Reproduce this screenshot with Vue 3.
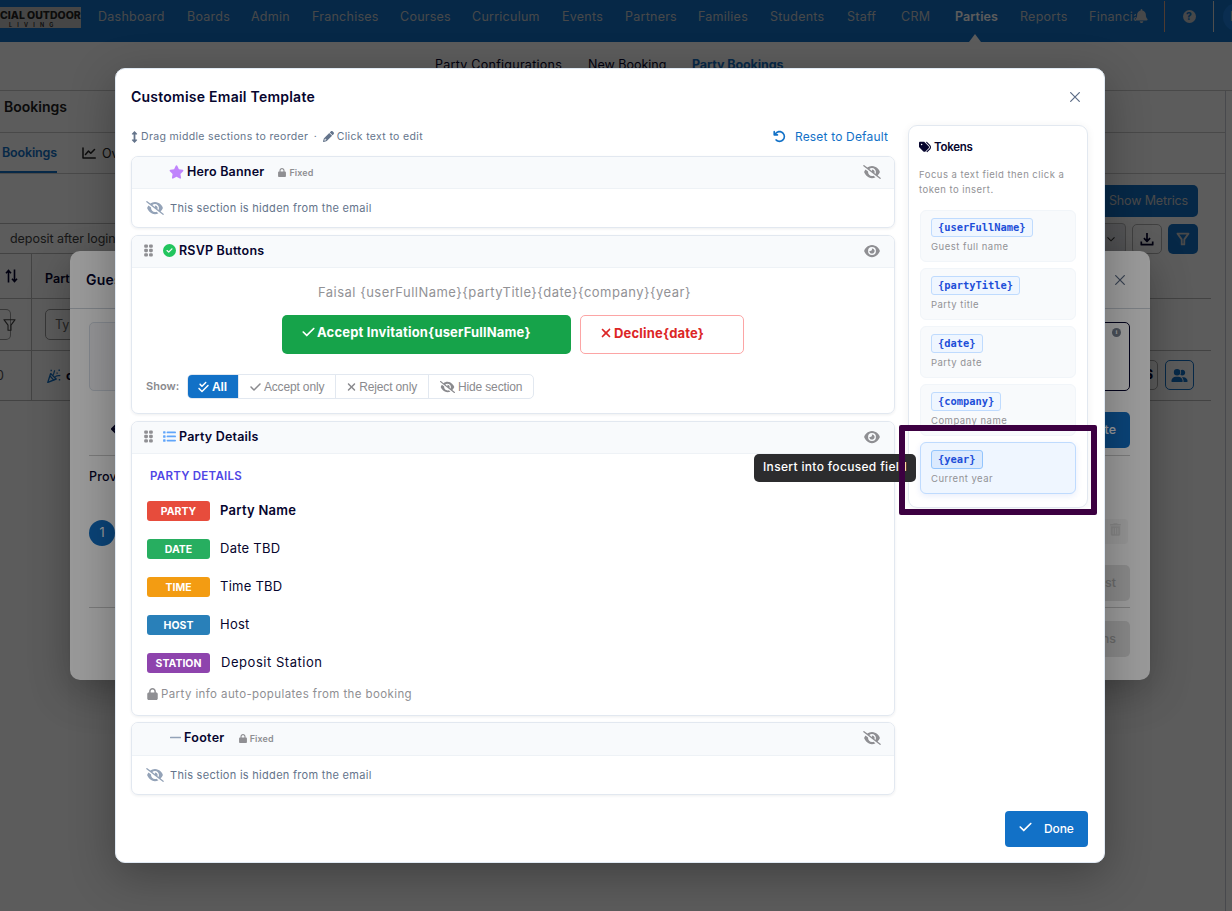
<script setup>
import { h } from 'vue'

const glyphs = {
  star: [576, 'M316.9 18C311.6 7 300.4 0 288.1 0s-23.4 7-28.8 18L195 150.3 51.4 171.5c-12 1.8-22 10.2-25.7 21.7s-.7 24.2 7.9 32.7L137.8 329 113.2 474.7c-2 12 3 24.2 12.9 31.3s23 8 33.8 2.3l128.3-68.5 128.3 68.5c10.8 5.7 23.9 4.9 33.8-2.3s14.9-19.3 12.9-31.3L438.5 329 542.7 225.9c8.6-8.5 11.7-21.2 7.9-32.7s-13.7-19.9-25.7-21.7L381.2 150.3 316.9 18z'],
  lock: [448, 'M144 144v48H304V144c0-44.2-35.8-80-80-80s-80 35.8-80 80zM80 192V144C80 64.5 144.5 0 224 0s144 64.5 144 144v48h16c35.3 0 64 28.7 64 64V448c0 35.3-28.7 64-64 64H64c-35.3 0-64-28.7-64-64V256c0-35.3 28.7-64 64-64H80z'],
  eye: [576, 'M288 32c-80.8 0-145.5 36.8-192.6 80.6C48.6 156 17.3 208 2.5 243.7c-3.3 7.9-3.3 16.7 0 24.6C17.3 304 48.6 356 95.4 399.4C142.5 443.2 207.2 480 288 480s145.5-36.8 192.6-80.6c46.8-43.5 78.1-95.4 93-131.1c3.3-7.9 3.3-16.7 0-24.6c-14.9-35.7-46.2-87.7-93-131.1C433.5 68.8 368.8 32 288 32zM144 256a144 144 0 1 1 288 0 144 144 0 1 1 -288 0zm144-64c0 35.3-28.7 64-64 64c-7.1 0-13.9-1.2-20.3-3.3c-5.5-1.8-11.9 1.6-11.7 7.4c.3 6.9 1.3 13.8 3.2 20.7c13.7 51.2 66.4 81.6 117.6 67.9s81.6-66.4 67.9-117.6c-11.1-41.5-47.8-69.4-88.6-71.1c-5.8-.2-9.2 6.1-7.4 11.7c2.1 6.4 3.3 13.2 3.3 20.3z'],
  eyeSlash: [640, 'M38.8 5.1C28.4-3.1 13.3-1.2 5.1 9.2S-1.2 34.7 9.2 42.9l592 464c10.4 8.2 25.5 6.3 33.7-4.1s6.3-25.5-4.1-33.7L525.6 386.7c39.6-40.6 66.4-86.1 79.9-118.4c3.3-7.9 3.3-16.7 0-24.6c-14.9-35.7-46.2-87.7-93-131.1C465.5 68.8 400.8 32 320 32c-68.2 0-125 26.3-169.3 60.8L38.8 5.1zM223.1 149.5C248.6 126.2 282.7 112 320 112c79.5 0 144 64.5 144 144c0 24.9-6.3 48.3-17.4 68.7L408 294.5c8.4-19.3 10.6-41.4 4.8-63.3c-11.1-41.5-47.8-69.4-88.6-71.1c-5.8-.2-9.2 6.1-7.4 11.7c2.1 6.4 3.3 13.2 3.3 20.3c0 10.2-2.4 19.8-6.6 28.3l-90.3-70.8zM373 389.9c-16.4 6.5-34.3 10.1-53 10.1c-79.5 0-144-64.5-144-144c0-6.9 .5-13.6 1.4-20.2L83.1 161.5C60.3 191.2 44 220.8 34.5 243.7c-3.3 7.9-3.3 16.7 0 24.6c14.9 35.7 46.2 87.7 93 131.1C174.5 443.2 239.2 480 320 480c47.8 0 89.9-12.9 126.2-32.5L373 389.9z'],
  check: [448, 'M438.6 105.4c12.5 12.5 12.5 32.8 0 45.3l-256 256c-12.5 12.5-32.8 12.5-45.3 0l-128-128c-12.5-12.5-12.5-32.8 0-45.3s32.8-12.5 45.3 0L160 338.7 393.4 105.4c12.5-12.5 32.8-12.5 45.3 0z'],
  cross: [384, 'M342.6 150.6c12.5-12.5 12.5-32.8 0-45.3s-32.8-12.5-45.3 0L192 210.7 86.6 105.4c-12.5-12.5-32.8-12.5-45.3 0s-12.5 32.8 0 45.3L146.7 256 41.4 361.4c-12.5 12.5-12.5 32.8 0 45.3s32.8 12.5 45.3 0L192 301.3 297.4 406.6c12.5 12.5 32.8 12.5 45.3 0s12.5-32.8 0-45.3L237.3 256 342.6 150.6z'],
  checkDouble: [448, 'M342.6 86.6c12.5-12.5 12.5-32.8 0-45.3s-32.8-12.5-45.3 0L160 178.7l-57.4-57.4c-12.5-12.5-32.8-12.5-45.3 0s-12.5 32.8 0 45.3l80 80c12.5 12.5 32.8 12.5 45.3 0l160-160zm96 128c12.5-12.5 12.5-32.8 0-45.3s-32.8-12.5-45.3 0L160 402.7 54.6 297.4c-12.5-12.5-32.8-12.5-45.3 0s-12.5 32.8 0 45.3l128 128c12.5 12.5 32.8 12.5 45.3 0l256-256z'],
  circleCheck: [512, 'M256 512A256 256 0 1 0 256 0a256 256 0 1 0 0 512zM369 209L241 337c-9.4 9.4-24.6 9.4-33.9 0l-64-64c-9.4-9.4-9.4-24.6 0-33.9s24.6-9.4 33.9 0l47 47L335 175c9.4-9.4 24.6-9.4 33.9 0s9.4 24.6 0 33.9z'],
  tags: [512, 'M345 39.1L472.8 168.4c52.4 53 52.4 138.2 0 191.2L360.8 472.9c-9.3 9.4-24.5 9.5-33.9 .2s-9.5-24.5-.2-33.9L438.6 325.9c33.9-34.3 33.9-89.4 0-123.7L310.9 72.9c-9.3-9.4-9.2-24.6 .2-33.9s24.6-9.2 33.9 .2zM0 229.5V80C0 53.5 21.5 32 48 32H197.5c17 0 33.3 6.7 45.3 18.7l168 168c25 25 25 65.5 0 90.5L277.3 442.7c-25 25-65.5 25-90.5 0l-168-168C6.7 262.7 0 246.5 0 229.5zM144 144a32 32 0 1 0 -64 0 32 32 0 1 0 64 0z'],
  pencil: [512, 'M410.3 231l11.3-11.3-33.9-33.9-62.1-62.1L291.7 89.8l-11.3 11.3-22.6 22.6L58.6 322.9c-10.4 10.4-18 23.3-22.2 37.4L1 480.7c-2.5 8.4-.2 17.5 6.1 23.7s15.3 8.5 23.7 6.1l120.3-35.4c14.1-4.2 27-11.8 37.4-22.2L387.7 253.7 410.3 231zM160 399.4l-9.1 22.7c-4 3.1-8.5 5.4-13.3 6.9L59.4 452l23-78.1c1.4-4.9 3.8-9.4 6.9-13.3l22.7-9.1v32c0 8.800 7.2 16 16 16h32zM362.7 18.7L348.3 33.2 325.7 55.8 314.3 67.1l33.9 33.9 62.1 62.1 33.9 33.9 11.3-11.3 22.6-22.6 14.5-14.5c25-25 25-65.5 0-90.5L453.3 18.7c-25-25-65.5-25-90.5 0z'],
  undo: [512, 'M125.7 160H176c17.7 0 32 14.3 32 32s-14.3 32-32 32H48c-17.7 0-32-14.3-32-32V64c0-17.7 14.3-32 32-32s32 14.3 32 32v51.2L97.6 97.6c87.5-87.5 229.3-87.5 316.8 0s87.5 229.3 0 316.8s-229.3 87.5-316.8 0c-12.5-12.5-12.5-32.8 0-45.3s32.8-12.5 45.3 0c62.5 62.5 163.8 62.5 226.3 0s62.5-163.8 0-226.3s-163.8-62.5-226.3 0L125.7 160z'],
  upDown: [256, 'M128 0L16 120q-12 30 16 30H90V362H32q-28 0-16 30L128 512 240 392q12-30-16-30H166V150h58q28 0 16-30z'],
  bell: [448, 'M224 0c-17.7 0-32 14.3-32 32V51.2C119 66 64 130.6 64 208v18.8c0 47-17.3 92.4-48.5 127.6l-7.4 8.3c-8.4 9.4-10.4 22.9-5.3 34.4S19.4 416 32 416H416c12.6 0 24-7.4 29.2-18.9s3.1-25-5.3-34.4l-7.4-8.3C401.3 319.2 384 273.9 384 226.8V208c0-77.4-55-142-128-156.8V32c0-17.7-14.3-32-32-32zm45.3 493.3c12-12 18.7-28.3 18.7-45.3H224 160c0 17 6.7 33.3 18.7 45.3s28.3 18.7 45.3 18.7s33.3-6.7 45.3-18.7z'],
  list: [512, 'M24 46h56a20 20 0 0 1 20 20v56a20 20 0 0 1-20 20H24a20 20 0 0 1-20-20V66a20 20 0 0 1 20-20zM24 206h56a20 20 0 0 1 20 20v56a20 20 0 0 1-20 20H24a20 20 0 0 1-20-20v-56a20 20 0 0 1 20-20zM24 366h56a20 20 0 0 1 20 20v56a20 20 0 0 1-20 20H24a20 20 0 0 1-20-20v-56a20 20 0 0 1 20-20zM176 60h302a34 34 0 0 1 0 68H176a34 34 0 0 1 0-68zM176 220h302a34 34 0 0 1 0 68H176a34 34 0 0 1 0-68zM176 380h302a34 34 0 0 1 0 68H176a34 34 0 0 1 0-68z'],
  grip: [352, 'M48 20h64a42 42 0 0 1 42 42v48a42 42 0 0 1-42 42H48a42 42 0 0 1-42-42V62a42 42 0 0 1 42-42zM240 20h64a42 42 0 0 1 42 42v48a42 42 0 0 1-42 42h-64a42 42 0 0 1-42-42V62a42 42 0 0 1 42-42zM48 190h64a42 42 0 0 1 42 42v48a42 42 0 0 1-42 42H48a42 42 0 0 1-42-42v-48a42 42 0 0 1 42-42zM240 190h64a42 42 0 0 1 42 42v48a42 42 0 0 1-42 42h-64a42 42 0 0 1-42-42v-48a42 42 0 0 1 42-42zM48 360h64a42 42 0 0 1 42 42v48a42 42 0 0 1-42 42H48a42 42 0 0 1-42-42v-48a42 42 0 0 1 42-42zM240 360h64a42 42 0 0 1 42 42v48a42 42 0 0 1-42 42h-64a42 42 0 0 1-42-42v-48a42 42 0 0 1 42-42z'],
  minus: [448, 'M24 222h400a30 30 0 0 1 0 60H24a30 30 0 0 1 0-60z'],
  users: [640, 'M96 128a128 128 0 1 1 256 0A128 128 0 1 1 96 128zM0 482.3C0 383.8 79.8 304 178.3 304h91.4C368.2 304 448 383.8 448 482.3c0 16.4-13.3 29.7-29.7 29.7H29.7C13.3 512 0 498.7 0 482.3zM609.3 512H471.4c5.4-9.4 8.6-20.3 8.6-32v-8c0-60.7-27.1-115.2-69.8-151.8c2.4-.1 4.7-.2 7.1-.2h61.4C567.8 320 640 392.2 640 481.3c0 17-13.8 30.7-30.7 30.7zM432 256c-31 0-59-12.6-79.3-32.9C372.4 196.5 384 163.6 384 128c0-26.8-6.6-52.1-18.3-74.3C384.3 40.1 407.2 32 432 32c61.9 0 112 50.1 112 112s-50.1 112-112 112z'],
  trash: [448, 'M135 18l-7 14H32a32 32 0 0 0 0 64h384a32 32 0 0 0 0-64h-96l-7-14A32 32 0 0 0 284 0H164a32 32 0 0 0-29 18zM416 128H32v320a64 64 0 0 0 64 64h256a64 64 0 0 0 64-64zM144 208v224a16 16 0 0 1-32 0V208a16 16 0 0 1 32 0zM240 208v224a16 16 0 0 1-32 0V208a16 16 0 0 1 32 0zM336 208v224a16 16 0 0 1-32 0V208a16 16 0 0 1 32 0z'],
}

const Glyph = (props) =>
  h('svg', { viewBox: `0 0 ${glyphs[props.name][0]} 512`, fill: 'currentColor' }, [
    h('path', { d: glyphs[props.name][1] }),
  ])
Glyph.props = ['name']

const nav = ['Dashboard', 'Boards', 'Admin', 'Franchises', 'Courses', 'Curriculum', 'Events', 'Partners', 'Families', 'Students', 'Staff', 'CRM', 'Parties', 'Reports', 'Financials']

const details = [
  { tag: 'PARTY', value: 'Party Name', tone: 'red', look: 'strong' },
  { tag: 'DATE', value: 'Date TBD', tone: 'green' },
  { tag: 'TIME', value: 'Time TBD', tone: 'orange' },
  { tag: 'HOST', value: 'Host', tone: 'blue' },
  { tag: 'STATION', value: 'Deposit Station', tone: 'purple', look: 'loose' },
]

const tokens = [
  { code: '{userFullName}', label: 'Guest full name' },
  { code: '{partyTitle}', label: 'Party title' },
  { code: '{date}', label: 'Party date' },
  { code: '{company}', label: 'Company name' },
  { code: '{year}', label: 'Current year', active: true },
]
</script>

<template>
  <div class="screen">
    <div class="page">
      <header class="navbar">
        <div class="logo"><b>CIAL OUTDOOR</b><span>LIVING</span></div>
        <nav class="nav-links">
          <a v-for="n in nav" :key="n" :class="{ current: n === 'Parties' }">{{ n }}</a>
        </nav>
        <div class="nav-tools">
          <div class="tool-bell"><Glyph name="bell" class="i-bell" /></div>
          <div class="tool-help"><span class="help">?</span></div>
          <div class="avatar">F</div>
        </div>
      </header>
      <div class="subnav">
        <span class="wide">Party Configurations</span><span>New Booking</span><b>Party Bookings</b>
      </div>
      <div class="workspace">
        <div class="page-title">Bookings</div>
        <div class="tabs">
          <div class="tab on">Bookings</div>
          <div class="tab">
            <svg class="i-chart" viewBox="0 0 14 12" fill="none" stroke="currentColor" stroke-width="1.5" stroke-linecap="round" stroke-linejoin="round"><path d="M1 1v10h12.3M3.5 7.5l3-3.400 2.300 2.200L12.500 2.500" /></svg>
            <span>Overview</span>
          </div>
        </div>
        <div class="metrics-row"><span class="btn-metrics">Show Metrics</span></div>
        <div class="search-row">
          <div class="search">deposit after login</div>
          <div class="select"><svg viewBox="0 0 10 10" fill="none" stroke="currentColor" stroke-width="1.1"><path d="M1.5 3.300l3.500 3.500 3.500-3.500" /></svg></div>
          <div class="sq">
            <svg viewBox="0 0 14 14" fill="none" stroke="currentColor" stroke-width="1.7" stroke-linejoin="round"><path d="M7 1v8M3.900 6.200L7 9.300l3.100-3.100M1.300 9.500v3.200h11.400V9.500" /></svg>
          </div>
          <div class="sq solid">
            <svg viewBox="0 0 14 14" fill="none" stroke="currentColor" stroke-width="1.8" stroke-linejoin="round"><path d="M1.500 1.600h11L8.300 7.400v5H5.700v-5z" /></svg>
          </div>
        </div>
        <div class="table">
          <div class="tr head">
            <div class="cell first"><svg class="i-sort" viewBox="0 0 12 14" fill="none" stroke="currentColor" stroke-width="1.6"><path d="M3 13.500V1.500M.5 4.200L3 1.500l2.500 2.700M9 .5v12M6.500 9.800L9 12.500l2.500-2.700" /></svg></div>
            <div class="cell"><b>Party</b></div>
          </div>
          <div class="tr filters">
            <div class="cell first"><span class="stub"></span><svg class="i-funnel" viewBox="0 0 14 14" fill="none" stroke="currentColor" stroke-width="1.2" stroke-linejoin="round"><path d="M1 1.300h12L8.600 7.200v5.500H5.400V7.200z" /></svg></div>
            <div class="cell"><span class="field">Type</span></div>
          </div>
          <div class="tr row">
            <div class="cell first"><span class="zero">0</span></div>
            <div class="cell">
              <svg class="i-party" viewBox="0 0 14 14"><path d="M3.600 4.600l5.600 5.400L.8 13.400z" fill="none" stroke="currentColor" stroke-width="1.400" stroke-linejoin="round" /><path d="M3 7l4 4.300M6 5.800c1.500-1 .5-2.500 1.800-4.500M8.300 8c1-1.800 2.700-1 5-1.600" fill="none" stroke="currentColor" stroke-width="1.200" /><path d="M3.500.8h1.400v1.400H3.500zM11.500.6h1.400V2h-1.400zM9.400 3.400h1.400v1.400H9.400zM11.800 10h1.400v1.400h-1.400z" fill="currentColor" /></svg>
              <b>claim</b>
            </div>
            <div class="row-actions"><span class="act">S</span><span class="act people"><Glyph name="users" /></span></div>
          </div>
        </div>
      </div>
    </div>

    <div class="mask">
      <div class="guest">
        <div class="guest-head"><b>Guest Invitations</b><svg class="i-close" viewBox="0 0 10 10" stroke="currentColor" stroke-width="1.200"><path d="M.3.3l9.400 9.400M9.700.3L.3 9.700" /></svg></div>
        <div class="guest-body">
          <div class="cards"><div class="card-plain"></div><div class="card-picked"><span>i</span></div></div>
          <div class="bar"><svg class="i-arrow" viewBox="0 0 12 10" fill="none" stroke="currentColor" stroke-width="2"><path d="M12 5H1M5 1L1 5l4 4" /></svg><span class="btn-primary">Generate</span></div>
          <div class="provide">Provide guests</div>
          <div class="step-row"><span class="step">1</span><span class="bin"><Glyph name="trash" /></span></div>
          <div class="bar line"><span class="btn-grey">Add Guest</span></div>
          <div class="bar last"><span class="btn-grey">Send Invitations</span></div>
        </div>
      </div>
    </div>

    <div class="mask">
      <div class="modal">
        <div class="modal-head"><h1>Customise Email Template</h1><svg class="i-close" viewBox="0 0 10 10" stroke="currentColor" stroke-width="1.200"><path d="M.3.3l9.400 9.400M9.700.3L.3 9.700" /></svg></div>
        <div class="columns">
          <main class="editor">
            <div class="hints">
              <Glyph name="upDown" class="i-updown" /><span>Drag middle sections to reorder</span><i>·</i>
              <Glyph name="pencil" class="i-pencil" /><span>Click text to edit</span>
              <a class="reset"><Glyph name="undo" /><span>Reset to Default</span></a>
            </div>

            <section class="block hero">
              <div class="block-head">
                <Glyph name="star" class="i-star" /><b>Hero Banner</b>
                <span class="pin"><Glyph name="lock" /><span>Fixed</span></span>
                <Glyph name="eyeSlash" class="vis off" />
              </div>
              <div class="hidden-note"><Glyph name="eyeSlash" /><span>This section is hidden from the email</span></div>
            </section>

            <section class="block rsvp">
              <div class="block-head">
                <Glyph name="grip" class="i-grip" /><Glyph name="circleCheck" class="i-ok" /><b>RSVP Buttons</b>
                <Glyph name="eye" class="vis" />
              </div>
              <p class="intro">Faisal {userFullName}{partyTitle}{date}{company}{year}</p>
              <div class="choices">
                <div class="accept"><Glyph name="check" /><span>Accept Invitation{userFullName}</span></div>
                <div class="decline"><Glyph name="cross" /><span>Decline{date}</span></div>
              </div>
              <div class="show">
                <b>Show:</b>
                <div class="segments">
                  <span class="seg on"><Glyph name="checkDouble" /><span>All</span></span>
                  <span class="seg"><Glyph name="check" /><span>Accept only</span></span>
                  <span class="seg"><Glyph name="cross" class="slim" /><span>Reject only</span></span>
                  <span class="seg"><Glyph name="eyeSlash" class="wide" /><span>Hide section</span></span>
                </div>
              </div>
            </section>

            <section class="block party">
              <div class="block-head">
                <Glyph name="grip" class="i-grip" /><Glyph name="list" class="i-list" /><b>Party Details</b>
                <Glyph name="eye" class="vis" />
              </div>
              <h2>PARTY DETAILS</h2>
              <div v-for="d in details" :key="d.tag" class="detail">
                <span class="tag" :class="d.tone">{{ d.tag }}</span>
                <span class="value" :class="d.look">{{ d.value }}</span>
              </div>
              <div class="auto"><Glyph name="lock" /><span>Party info auto-populates from the booking</span></div>
            </section>

            <section class="block foot">
              <div class="block-head">
                <Glyph name="minus" class="i-minus" /><b>Footer</b>
                <span class="pin"><Glyph name="lock" /><span>Fixed</span></span>
                <Glyph name="eyeSlash" class="vis off" />
              </div>
              <div class="hidden-note"><Glyph name="eyeSlash" /><span>This section is hidden from the email</span></div>
            </section>
          </main>

          <aside class="tokens">
            <h3><Glyph name="tags" /><span>Tokens</span></h3>
            <p>Focus a text field then click a<br />token to insert.</p>
            <div v-for="t in tokens" :key="t.code" class="token" :class="{ active: t.active }">
              <code>{{ t.code }}</code>
              <div>{{ t.label }}</div>
            </div>
          </aside>
        </div>
        <div class="actions"><button class="done"><Glyph name="check" /><span>Done</span></button></div>
        <div class="tooltip">Insert into focused field</div>
        <div class="frame"></div>
      </div>
    </div>
  </div>
</template>

<style>
body {
  overflow: hidden;
}
</style>

<style scoped>
* {
  box-sizing: border-box;
}
.screen {
  position: relative;
  width: 1232px;
  height: 911px;
  overflow: hidden;
  background: #fff;
  color: #06052e;
  font-family: Inter, 'DM Sans', 'Liberation Sans', sans-serif;
  font-size: 12.5px;
  white-space: nowrap;
}
svg {
  display: block;
  flex: none;
}
.page {
  height: 911px;
}
.navbar {
  display: flex;
  height: 42px;
  background: #1271c7;
  color: #c7c9cc;
}
.logo {
  display: flex;
  flex: none;
  flex-direction: column;
  width: 81px;
  height: 21px;
  margin: 7px 17px 0 0;
  overflow: hidden;
  background: #c4c4c4;
  color: #222;
  font-size: 10.5px;
  line-height: 17px;
}
.logo b {
  font-weight: 800;
}
.logo span {
  margin: -2px 0 0 9px;
  font-size: 5.5px;
  line-height: 6px;
  font-weight: 600;
  letter-spacing: 5.2px;
}
.nav-links {
  display: grid;
  flex: none;
  grid-template-columns: 89px 64px 61px 88px 72px 90px 63px 73px 72px 77px 54px 54px 65px 69px 48px;
  width: 1038px;
  overflow: hidden;
  line-height: 33px;
  letter-spacing: 0.25px;
}
.nav-links a {
  position: relative;
}
.nav-links .current {
  color: #fff;
  font-weight: 600;
  letter-spacing: 0.1px;
}
.current::after {
  content: '';
  position: absolute;
  left: 14px;
  top: 34px;
  border: 6px solid transparent;
  border-top: 0;
  border-bottom: 8px solid #fff;
}
.nav-tools {
  display: flex;
  flex: none;
  align-items: center;
  height: 33px;
}
.tool-bell {
  width: 29px;
  height: 31px;
  padding: 8px 0 0;
  border-right: 1px solid #d9a58a;
}
.i-bell {
  width: 13px;
  height: 14px;
  margin-left: -1px;
}
.tool-help {
  display: flex;
  align-items: center;
  justify-content: center;
  width: 49px;
  height: 31px;
  border-right: 1px solid #d9d9d9;
}
.help {
  width: 13px;
  height: 13px;
  border-radius: 50%;
  background: #c7c9cc;
  color: #1271c7;
  font-size: 10px;
  line-height: 13px;
  font-weight: 800;
  text-align: center;
}
.avatar {
  width: 28px;
  height: 28px;
  margin-left: 9px;
  padding-left: 7px;
  border-radius: 50%;
  background: #1d7fe0;
  line-height: 28px;
}
.subnav {
  display: grid;
  grid-template-columns: 153px 104px 100px;
  height: 49px;
  padding-left: 435px;
  border-bottom: 1px solid #ccc;
  line-height: 46px;
}
.subnav .wide {
  letter-spacing: 0.26px;
}
.subnav b {
  color: #1271c7;
  font-weight: 700;
  letter-spacing: -0.1px;
}
.workspace {
  width: 1226px;
  height: 820px;
  border-right: 1px solid #c9ced6;
}
.page-title {
  height: 42px;
  padding-left: 4px;
  border-bottom: 1px solid #ccc;
  color: #222;
  font-size: 14px;
  font-weight: 600;
  line-height: 31px;
}
.tabs {
  display: flex;
  height: 41px;
  border-bottom: 1px solid #ccc;
  line-height: 41px;
}
.tab {
  display: flex;
  align-items: center;
  height: 40px;
  margin-left: 25px;
  gap: 6px;
  color: #222;
}
.tab.on {
  width: 57px;
  margin: 0;
  padding-left: 2px;
  border-bottom: 2px solid #1271c7;
  color: #1271c7;
  font-weight: 600;
  letter-spacing: -0.15px;
}
.i-chart {
  width: 14px;
  height: 12px;
}
.metrics-row {
  display: flex;
  justify-content: flex-end;
  height: 49px;
  padding: 11px 27px 0 0;
}
.btn-metrics {
  width: 110px;
  height: 32px;
  padding-left: 21px;
  border-radius: 5px;
  background: #1271c7;
  color: #ccc;
  line-height: 32px;
  letter-spacing: -0.15px;
}
.search-row {
  display: flex;
  gap: 6px;
  height: 31px;
  padding-right: 27px;
}
.search {
  width: 1000px;
  height: 31px;
  padding-left: 10px;
  border: 1px solid #bbb;
  border-left: 0;
  color: #444;
  line-height: 30px;
  letter-spacing: -0.05px;
}
.select {
  display: flex;
  align-items: center;
  justify-content: flex-end;
  width: 120px;
  padding-right: 9px;
  border: 1px solid #bbb;
  border-radius: 4px;
  background: #e9ecf0;
  color: #333;
}
.select svg {
  width: 10px;
}
.sq {
  display: flex;
  align-items: center;
  justify-content: center;
  width: 30px;
  height: 30px;
  margin-top: 1px;
  border: 1px solid #b5b5b5;
  border-radius: 5px;
}
.sq.solid {
  border: 0;
  background: #1271c7;
  color: #ccc;
}
.sq svg {
  width: 14px;
}
.table {
  width: 1211px;
}
.tr {
  display: flex;
  height: 50px;
  border-bottom: 1px solid #bbb;
}
.tr.head {
  height: 45px;
}
.tr.filters {
  height: 52px;
}
.cell {
  display: flex;
  align-items: center;
  gap: 5px;
  padding-left: 13px;
}
.cell.first {
  position: relative;
  width: 32px;
  padding: 0;
  border-right: 1px solid #bbb;
}
.head .cell b {
  padding-top: 5px;
  font-weight: 600;
}
.i-sort {
  width: 13px;
  height: 14px;
  margin-left: 5px;
}
.stub {
  width: 11px;
  height: 31px;
  border: 1px solid #999;
  border-left: 0;
  border-radius: 0 5px 5px 0;
}
.i-funnel {
  width: 13px;
  height: 14px;
  margin-left: -13px;
  color: #444;
}
.field {
  width: 120px;
  height: 31px;
  padding-left: 9px;
  border: 1px solid #999;
  border-radius: 5px;
  color: #666;
  line-height: 30px;
}
.zero {
  margin-left: -4px;
  color: #555;
}
.i-party {
  width: 14px;
  height: 14px;
  margin-left: 2px;
  color: #1271c7;
}
.row-actions {
  display: flex;
  gap: 7px;
  margin: 9px 17px 0 auto;
}
.act {
  width: 30px;
  height: 30px;
  padding-right: 4px;
  border: 1px solid #aaa;
  border-radius: 5px;
  font-weight: 800;
  line-height: 28px;
  text-align: right;
}
.act.people {
  display: flex;
  align-items: center;
  justify-content: center;
  width: 29px;
  padding: 0;
  border-color: #1271c7;
  color: #1271c7;
}
.people svg {
  width: 17px;
  height: 13px;
}
.mask {
  position: absolute;
  inset: 0;
  background: rgba(0, 0, 0, 0.4);
}
.guest {
  width: 1080px;
  height: 429px;
  margin: 251px 0 0 70px;
  border-radius: 10px;
  background: #fff;
  box-shadow: 0 12px 40px rgba(0, 0, 0, 0.3);
}
.guest-head {
  display: flex;
  justify-content: space-between;
  align-items: center;
  height: 58px;
  padding: 0 25px 0 16px;
  border-bottom: 1px solid #ccd2da;
  font-size: 14px;
}
.guest-head b {
  font-weight: 600;
  letter-spacing: 0.2px;
}
.i-close {
  width: 10px;
  height: 10px;
  color: #5b6b85;
}
.guest-body {
  padding: 13px 20px 0 19px;
}
.cards {
  display: flex;
  justify-content: space-between;
  height: 69px;
}
.card-plain {
  width: 500px;
  border: 1px solid #d8dee8;
  border-radius: 5px;
  background: #f5f6f8;
}
.card-picked {
  width: 500px;
  padding: 5px 8px;
  border: 1px solid #06052e;
  border-radius: 5px;
}
.card-picked span {
  display: block;
  width: 9px;
  height: 9px;
  margin-left: auto;
  border-radius: 50%;
  background: #7c8594;
  color: #fff;
  font: bold 7px/9px 'Liberation Serif', serif;
  text-align: center;
}
.bar {
  display: flex;
  justify-content: flex-end;
  height: 65px;
  padding-top: 21px;
  border-bottom: 1px solid #ccc;
}
.i-arrow {
  width: 12px;
  height: 10px;
  margin: 12px auto 0 22px;
}
.btn-primary,
.btn-grey {
  height: 36px;
  padding: 0 14px;
  border-radius: 5px;
  background: #1271c7;
  color: #fff;
  font-weight: 500;
  line-height: 36px;
}
.btn-grey {
  background: #e3e3e3;
  color: #b0b0b0;
}
.provide {
  height: 63px;
  font-weight: 500;
  line-height: 41px;
  letter-spacing: 0.2px;
}
.step-row {
  display: flex;
  justify-content: space-between;
  height: 46px;
}
.step {
  width: 26px;
  height: 26px;
  margin-top: 1px;
  border-radius: 50%;
  background: #1271c7;
  color: #fff;
  line-height: 26px;
  text-align: center;
}
.bin {
  width: 30px;
  height: 25px;
  margin-right: 2px;
  padding: 4px 0 0 12px;
  border-radius: 4px;
  background: #f5f5f5;
  color: #ddd;
}
.bin svg {
  width: 11px;
  height: 13px;
}
.bar.line {
  height: 43px;
  padding-top: 0;
}
.bar.last {
  padding-top: 13px;
  border: 0;
}
.modal {
  position: relative;
  width: 990px;
  height: 795px;
  margin: 68px 0 0 115px;
  border: 1px solid #e0e9f3;
  border-radius: 10px;
  background: #fff;
  box-shadow: 0 12px 45px rgba(0, 0, 0, 0.3);
}
.modal-head {
  display: flex;
  align-items: center;
  justify-content: space-between;
  height: 56px;
  padding: 0 24px 0 15px;
}
h1 {
  margin: 0;
  padding-bottom: 1px;
  font-size: 14px;
  font-weight: 600;
  letter-spacing: 0.24px;
}
.columns {
  display: flex;
  gap: 13px;
  padding-left: 15px;
}
.editor {
  width: 764px;
}
.hints {
  display: flex;
  align-items: center;
  height: 31px;
  padding-bottom: 8px;
  color: #64748b;
  font-size: 10.5px;
  letter-spacing: 0.34px;
}
.i-updown {
  width: 7px;
  height: 12px;
  margin-right: 3px;
}
.hints i {
  margin: 0 5.5px;
  font-style: normal;
}
.i-pencil {
  width: 11px;
  height: 11px;
  margin-right: 3px;
}
.reset {
  display: flex;
  align-items: center;
  gap: 9px;
  margin: 0 7px 0 auto;
  color: #1271c7;
  font-size: 12px;
  letter-spacing: 0.17px;
}
.reset svg {
  width: 13px;
  height: 13px;
}
.block {
  margin-bottom: 7px;
  border: 1px solid #e2e8f0;
  border-radius: 7px;
  box-shadow: 0 1px 3px rgba(15, 23, 42, 0.07);
  overflow: hidden;
}
.hero {
  height: 72px;
}
.rsvp {
  height: 179px;
}
.party {
  height: 295px;
  margin-bottom: 6px;
}
.foot {
  height: 73px;
}
.block-head {
  display: flex;
  align-items: center;
  height: 32px;
  padding: 0 14px 2px 12px;
  border-bottom: 1px solid #eef2f6;
  background: #f8fafc;
  font-size: 12.5px;
  letter-spacing: 0.2px;
}
.foot .block-head {
  height: 33px;
  padding-bottom: 3px;
  letter-spacing: 0.3px;
}
.block-head b {
  font-weight: 600;
}
.i-star {
  width: 15px;
  height: 14px;
  margin: 0 3px 0 25px;
  color: #c084fc;
}
.pin {
  display: flex;
  align-items: center;
  gap: 3px;
  margin-left: 14px;
  padding-top: 1px;
  color: #8f8f93;
  font-size: 9px;
  font-weight: 600;
  letter-spacing: 0.1px;
}
.pin svg {
  width: 8px;
  height: 9px;
}
.vis {
  width: 16px;
  height: 14px;
  margin-left: auto;
  color: #8f8f93;
}
.vis.off {
  width: 18px;
  margin-right: -1px;
}
.hidden-note {
  display: flex;
  align-items: center;
  gap: 6px;
  height: 38px;
  padding-left: 14px;
  color: #64748b;
  font-size: 11px;
  letter-spacing: 0.29px;
}
.hidden-note svg {
  width: 18px;
  height: 14px;
  color: #94a3b8;
}
.i-grip {
  width: 9px;
  height: 13px;
  margin-right: 10px;
  color: #8f8f93;
}
.i-ok {
  width: 13px;
  height: 13px;
  margin-right: 3px;
  color: #22c55e;
}
.i-list {
  width: 13px;
  height: 13px;
  margin-right: 3px;
  color: #60a5fa;
}
.i-minus {
  width: 11px;
  height: 13px;
  margin: 0 3px 0 26px;
  color: #94a3b8;
}
.intro {
  margin: 0;
  padding: 9px 17px 0 0;
  color: #929296;
  font-size: 13px;
  line-height: 31px;
  letter-spacing: 0.48px;
  text-align: center;
}
.choices {
  display: flex;
  gap: 9px;
  margin: 7px 0 0 150px;
  font-size: 13px;
  font-weight: 700;
  letter-spacing: 0.18px;
}
.accept,
.decline {
  display: flex;
  align-items: center;
  width: 289px;
  height: 39px;
  padding: 0 0 5px 20px;
  border-radius: 5px;
  background: #16a34a;
  color: #fff;
}
.accept svg {
  width: 13px;
  height: 14px;
  margin-right: 2px;
}
.decline {
  width: 164px;
  padding: 0 0 3px 19px;
  border: 1px solid #fca5a5;
  background: #fff;
  color: #dc2626;
}
.decline svg {
  width: 12px;
  height: 14px;
  margin-right: 2px;
}
.show {
  display: flex;
  align-items: center;
  margin: 20px 0 0 14px;
  gap: 8px;
  color: #8a8a8e;
}
.show b {
  width: 33px;
  padding-bottom: 1px;
  font-size: 11px;
  font-weight: 600;
}
.segments {
  display: flex;
  height: 25px;
  border: 1px solid #e2e8f0;
  border-radius: 5px;
  overflow: hidden;
  font-family: 'Liberation Sans', Arial, sans-serif;
  font-size: 12px;
  letter-spacing: -0.15px;
}
.seg {
  display: flex;
  align-items: center;
  gap: 3px;
  padding: 0 11px 0 11px;
  border-left: 1px solid #e2e8f0;
}
.seg.on {
  padding: 0 11px 0 10px;
  border: 0;
  background: #1271c7;
  color: #fff;
  font-weight: 700;
}
.seg svg {
  width: 11px;
  height: 12px;
}
.seg svg.wide {
  width: 15px;
}
.seg svg.slim {
  width: 9px;
}
h2 {
  margin: 0;
  padding: 9px 0 0 18px;
  color: #4f46e5;
  font-size: 11.5px;
  font-weight: 600;
  line-height: 27px;
  letter-spacing: 0.26px;
}
.detail {
  display: flex;
  align-items: center;
  gap: 10px;
  height: 38px;
  padding: 3px 0 0 15px;
  font-size: 13px;
  letter-spacing: 0.25px;
}
.tag {
  width: 63px;
  height: 20px;
  border-radius: 3px;
  color: #fff;
  font-size: 10.5px;
  font-weight: 700;
  line-height: 21px;
  letter-spacing: 0;
  text-align: center;
}
.red {
  background: #e74c3c;
}
.green {
  background: #27ae60;
}
.orange {
  background: #f39c12;
}
.blue {
  background: #2980b9;
}
.purple {
  background: #8e44ad;
}
.value {
  padding-bottom: 1px;
}
.value.strong {
  font-weight: 600;
}
.value.loose {
  padding-left: 1px;
  letter-spacing: 0.54px;
}
.auto {
  display: flex;
  align-items: center;
  gap: 3px;
  margin-top: 7px;
  padding-left: 15px;
  color: #8f8f93;
  font-size: 11.5px;
  letter-spacing: 0.4px;
}
.auto svg {
  width: 11px;
  height: 12px;
}
.tokens {
  width: 180px;
  height: 383px;
  padding: 11px 11px 0;
  border: 1px solid #e2e8f0;
  border-radius: 9px;
  box-shadow: 0 1px 8px rgba(15, 23, 42, 0.06);
}
h3 {
  display: flex;
  align-items: center;
  gap: 3px;
  height: 20px;
  margin: 0 0 0 -1px;
  font-size: 11.5px;
  font-weight: 600;
  letter-spacing: -0.25px;
}
h3 svg {
  width: 12px;
  height: 12px;
}
.tokens p {
  margin: 10px 0 13px -1px;
  color: #929296;
  font-size: 9.5px;
  line-height: 15px;
  letter-spacing: 0.48px;
}
.token {
  width: 156px;
  height: 52px;
  margin: 0 0 6px;
  padding: 7px 10px;
  border: 1px solid #f1f5f9;
  border-radius: 6px;
  background: #f8fafc;
  color: #929296;
  font-size: 9.5px;
  letter-spacing: 0.48px;
}
.token code {
  display: inline-block;
  height: 19px;
  padding: 0 6px;
  border: 1px solid #bfdbfe;
  border-radius: 3px;
  background: #eff6ff;
  color: #1d4ed8;
  font: bold 10.4px/17px 'DejaVu Sans Mono', monospace;
  letter-spacing: 0;
}
.token div {
  margin-top: 4px;
  line-height: 12px;
}
.token.active {
  border-color: #bfdbfe;
  background: #eff6ff;
  box-shadow: 0 2px 6px rgba(29, 78, 216, 0.1);
}
.token.active code {
  border-color: #93c5fd;
  background: #dbeafe;
}
.actions {
  display: flex;
  justify-content: flex-end;
  padding: 9px 16px 0 0;
}
.done {
  display: flex;
  align-items: center;
  gap: 12px;
  width: 83px;
  height: 36px;
  padding: 0 0 0 14px;
  border: 0;
  border-radius: 4px;
  background: #1271c7;
  color: #fff;
  font: 500 12px/36px Inter, sans-serif;
  letter-spacing: -0.1px;
}
.done svg {
  width: 13px;
  height: 14px;
  margin-top: -4px;
}
.tooltip {
  position: absolute;
  left: 638px;
  top: 385px;
  width: 162px;
  height: 28px;
  padding-left: 9px;
  border-radius: 5px;
  background: #2c2c2e;
  color: #fff;
  font-size: 12px;
  font-weight: 500;
  line-height: 26px;
  letter-spacing: 0.33px;
}
.frame {
  position: absolute;
  left: 782.5px;
  top: 356px;
  width: 198px;
  height: 90px;
  border: 6px solid #3c0041;
  border-radius: 2px;
}
</style>
